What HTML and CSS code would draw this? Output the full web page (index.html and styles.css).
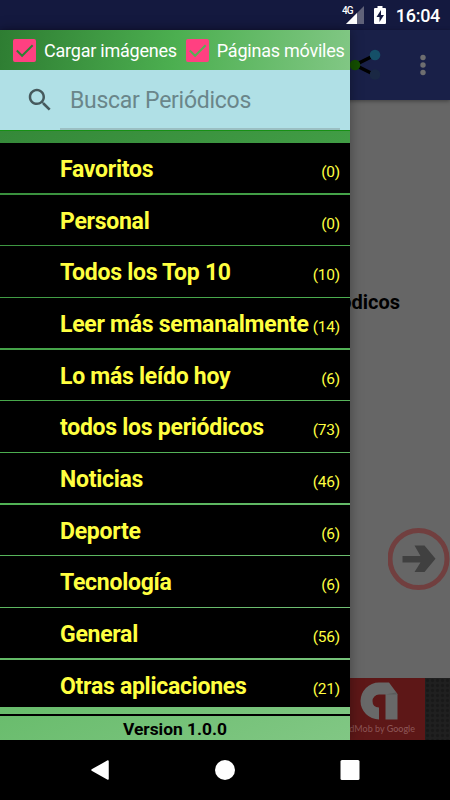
FILE: index.html
```
<!DOCTYPE html>
<html lang="es">
<head>
    <meta charset="UTF-8">
    <meta name="viewport" content="width=device-width, initial-scale=1.0">
    <title>Periódicos</title>
    <link rel="stylesheet" href="styles.css">
</head>
<body>
    <div class="status-bar">
        <span class="network">4G</span>
        <svg class="signal" width="18" height="18" viewBox="0 0 18 18">
            <path d="M18 0V18H0Z" fill="#606279"/>
            <path d="M11 7V18H0Z" fill="#fff"/>
        </svg>
        <svg class="battery" width="12" height="18" viewBox="0 0 12 18">
            <path d="M3.500 0h5v2H11q1 0 1 1v14q0 1-1 1H1q-1 0-1-1V3q0-1 1-1h2.500z" fill="#fff"/>
            <path d="M7 4L2.500 11H5.500V16L10 9H7Z" fill="#14193f"/>
        </svg>
        <span class="clock">16:04</span>
    </div>

    <div class="screen">
        <div class="toolbar">
            <svg class="share" width="34" height="34" viewBox="0 0 34 34">
                <path d="M25 7L5 17L25 27" fill="none" stroke="#000" stroke-width="3.500"/>
                <circle cx="5" cy="17" r="5.300" fill="#145000"/>
                <circle cx="25" cy="7" r="5.300" fill="#155068"/>
                <circle cx="25" cy="26.500" r="5.300" fill="#1a2844"/>
            </svg>
            <svg class="more" width="6" height="22" viewBox="0 0 6 22">
                <g fill="#6e6e70">
                    <circle cx="3" cy="3.500" r="2.700"/>
                    <circle cx="3" cy="11" r="2.700"/>
                    <circle cx="3" cy="18.500" r="2.700"/>
                </g>
            </svg>
        </div>
        <div class="content">
            <p class="message">Periódicos</p>
            <svg class="next" width="62" height="64" viewBox="0 0 62 64">
                <circle cx="30.500" cy="32" r="28.500" fill="none" stroke="#713f3f" stroke-width="5"/>
                <path d="M14.500 29H32.500L26.500 18.500H36.500L47.500 31.800L36.500 45H26.500L32.500 35.500H14.500Z" fill="#404040"/>
            </svg>
        </div>
        <div class="ad">
            <div class="ad-brand">
                <svg width="38" height="38" viewBox="0 0 38 38">
                    <path d="M19 0.500H29L37.500 12V37.500H25.500V12.500H19A6.500 6.500 0 0 0 12.500 19Q12.500 25 19 25.500V37.500A18.500 18.500 0 0 1 19 .5Z" fill="#686868"/>
                    <path d="M25.500 12.500H37.500L36 10.500Z" fill="#5a5a5a"/>
                </svg>
                <span class="ad-name">AdMob by <b>Google</b></span>
            </div>
        </div>

        <div class="drawer">
            <div class="options">
                <svg class="check first" width="23" height="23" viewBox="0 0 24 24">
                    <rect width="24" height="24" rx="2" fill="#ff4081"/>
                    <path d="M4 12L9.500 17.500L20.500 6.500" fill="none" stroke="#2b8134" stroke-width="2"/>
                </svg>
                <span class="option-name">Cargar imágenes</span>
                <svg class="check" width="23" height="23" viewBox="0 0 24 24">
                    <rect width="24" height="24" rx="2" fill="#ff4081"/>
                    <path d="M4 12L9.500 17.500L20.500 6.500" fill="none" stroke="#52b155" stroke-width="2"/>
                </svg>
                <span class="option-name">Páginas móviles</span>
            </div>
            <div class="search">
                <svg class="search-icon" width="30" height="30" viewBox="0 0 24 24">
                    <path fill="#465a5d" d="M15.500 14h-.79l-.28-.27C15.410 12.590 16 11.110 16 9.500 16 5.910 13.090 3 9.500 3S3 5.910 3 9.500 5.910 16 9.500 16c1.610 0 3.090-.59 4.230-1.570l.27.28v.79l5 4.990L20.490 19l-4.990-5zm-6 0C7.010 14 5 11.990 5 9.500S7.010 5 9.500 5 14 7.010 14 9.500 11.990 14 9.500 14z"/>
                </svg>
                <div class="search-field">Buscar Periódicos</div>
            </div>
            <ul class="categories">
                <li><span class="name">Favoritos</span><span class="count">(0)</span></li>
                <li><span class="name">Personal</span><span class="count">(0)</span></li>
                <li><span class="name">Todos los Top 10</span><span class="count">(10)</span></li>
                <li><span class="name">Leer más semanalmente</span><span class="count">(14)</span></li>
                <li><span class="name">Lo más leído hoy</span><span class="count">(6)</span></li>
                <li><span class="name">todos los periódicos</span><span class="count">(73)</span></li>
                <li><span class="name">Noticias</span><span class="count">(46)</span></li>
                <li><span class="name">Deporte</span><span class="count">(6)</span></li>
                <li><span class="name">Tecnología</span><span class="count">(6)</span></li>
                <li><span class="name">General</span><span class="count">(56)</span></li>
                <li><span class="name">Otras aplicaciones</span><span class="count">(21)</span></li>
            </ul>
            <div class="version">Version 1.0.0</div>
        </div>
    </div>

    <div class="nav-bar">
        <svg width="20" height="20" viewBox="0 0 20 20"><path d="M18 1V19L2 10Z" fill="#fff" stroke="#fff" stroke-width="1.500" stroke-linejoin="round"/></svg>
        <svg width="20" height="20" viewBox="0 0 20 20"><circle cx="10" cy="10" r="10" fill="#fff"/></svg>
        <svg width="20" height="20" viewBox="0 0 20 20"><rect x="0.500" width="19" height="20" rx="1.500" fill="#fff"/></svg>
    </div>
</body>
</html>
```
FILE: styles.css
```
* {
    box-sizing: border-box;
}
body {
    display: flex;
    flex-direction: column;
    width: 450px;
    height: 800px;
    margin: 0;
    overflow: hidden;
    font-family: Roboto, sans-serif;
    background: #000;
}

/* status bar */
.status-bar {
    display: flex;
    height: 30px;
    padding: 6px 10px 0 0;
    justify-content: flex-end;
    background: #14193f;
    color: #fff;
}
.network {
    margin-right: -7px;
    font-size: 10px;
    font-weight: 500;
    line-height: 9px;
    letter-spacing: -0.8px;
}
.battery {
    margin: 0 10px;
}
.clock {
    font-size: 18px;
    font-weight: 500;
    line-height: 20px;
    letter-spacing: -0.3px;
}

/* dimmed page behind the drawer */
.screen {
    position: relative;
    display: flex;
    flex-direction: column;
    height: 710px;
    background: #666;
}
.toolbar {
    display: flex;
    height: 70px;
    padding-right: 24px;
    align-items: center;
    justify-content: flex-end;
    gap: 36px;
    background: #192048;
    box-shadow: 0 1px 4px rgba(0,0,0,0.4);
}
.content {
    display: flex;
    flex: 1;
    flex-direction: column;
    align-items: flex-end;
    padding-top: 189px;
}
.message {
    margin: 0 50px 0 0;
    font-size: 20px;
    font-weight: 700;
    line-height: 26px;
}
.next {
    margin-top: 212px;
}
.ad {
    display: flex;
    height: 62px;
    padding-left: 330px;
    background: radial-gradient(#191919 30%, #202020 60%) 0 0 / 5px 5px;
}
.ad-brand {
    display: flex;
    flex-direction: column;
    width: 95px;
    padding: 4px 10px 0 0;
    align-items: flex-end;
    background: #5d1717;
    color: #8c5555;
}
.ad-brand svg {
    margin-right: 17px;
}
.ad-name {
    font-family: Lato, sans-serif;
    font-size: 9px;
    line-height: 18px;
    white-space: nowrap;
}
.ad-name b {
    font-weight: 500;
}

/* drawer */
.drawer {
    position: absolute;
    top: 0;
    left: 0;
    display: flex;
    flex-direction: column;
    width: 350px;
    height: 710px;
    background: linear-gradient(154deg, #2e7d32, #4caf50 50%, #81c784);
    box-shadow: 0 0 12px rgba(0,0,0,0.35);
}
.options {
    display: flex;
    height: 40px;
    align-items: center;
    background: linear-gradient(97deg, #2e7d32, #4caf50 50%, #81c784);
    color: #fff;
}
.check {
    margin: 0 8px 0 9px;
}
.check.first {
    margin-left: 13px;
}
.option-name {
    font-size: 18px;
    letter-spacing: -0.23px;
    white-space: nowrap;
}
.search {
    display: flex;
    height: 61px;
    padding: 0 10px 0 25px;
    align-items: center;
    background: #b0e0e6;
    border-bottom: 1px solid #179014;
}
.search-field {
    flex: 1;
    height: 60px;
    margin-left: 5px;
    padding-left: 10px;
    border-bottom: 2px solid #9bbfc3;
    color: #6a868a;
    font-size: 23px;
    line-height: 61px;
    letter-spacing: -0.27px;
}
.categories {
    height: 564px;
    margin: 12px 0 0;
    padding: 0;
    overflow: hidden;
    list-style: none;
}
.categories li {
    display: flex;
    height: 50.4px;
    margin-bottom: 1.28px;
    padding: 0 10px 0 60px;
    justify-content: space-between;
    background: #000;
    color: #ffff40;
    line-height: 54px;
    white-space: nowrap;
}
.name {
    font-size: 23px;
    font-weight: 700;
    letter-spacing: -0.27px;
}
.count {
    padding-top: 2px;
    font-size: 15.5px;
    letter-spacing: -0.2px;
}
.version {
    height: 26px;
    margin-top: 7px;
    border-top: 2px solid #000;
    font-size: 17.4px;
    font-weight: 700;
    line-height: 26px;
    text-align: center;
}

/* navigation bar */
.nav-bar {
    display: flex;
    height: 60px;
    align-items: center;
    justify-content: center;
    gap: 105px;
    background: #000;
}
```
